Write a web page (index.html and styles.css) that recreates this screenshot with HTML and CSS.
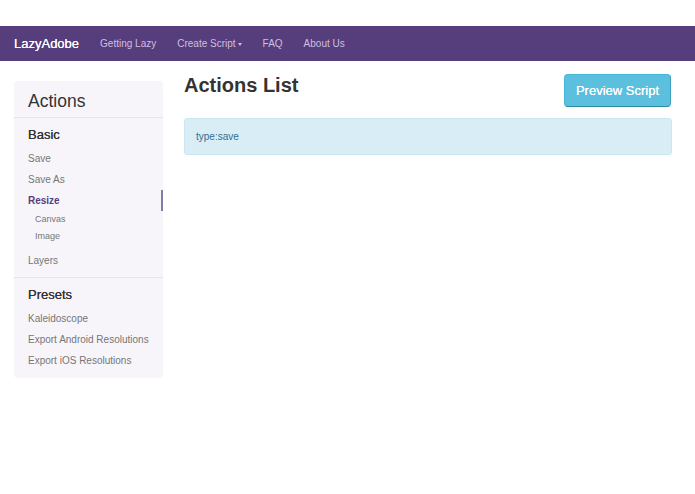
FILE: index.html
```html
<!DOCTYPE html>
<html>
<head>
<meta charset="utf-8">
<title>LazyAdobe</title>
<link rel="stylesheet" href="styles.css">
</head>
<body>
<header class="navbar">
  <a class="brand" href="#">LazyAdobe</a>
  <nav class="nav-links">
    <a href="#">Getting Lazy</a>
    <a href="#">Create Script<span class="caret"></span></a>
    <a href="#">FAQ</a>
    <a href="#">About Us</a>
  </nav>
</header>
<div class="layout">
  <aside class="sidebar">
    <h2 class="side-title">Actions</h2>
    <div class="side-section first">
      <h3 class="group-title">Basic</h3>
      <a class="item" href="#">Save</a>
      <a class="item" href="#">Save As</a>
      <a class="item active" href="#">Resize</a>
      <div class="sub">
        <a class="subitem" href="#">Canvas</a>
        <a class="subitem" href="#">Image</a>
      </div>
      <a class="item" href="#">Layers</a>
    </div>
    <div class="side-section">
      <h3 class="group-title">Presets</h3>
      <a class="item" href="#">Kaleidoscope</a>
      <a class="item" href="#">Export Android Resolutions</a>
      <a class="item" href="#">Export iOS Resolutions</a>
    </div>
  </aside>
  <main class="main">
    <div class="main-head">
      <h1 class="page-title">Actions List</h1>
      <button class="btn-info">Preview Script</button>
    </div>
    <div class="alert">type:save</div>
  </main>
</div>
</body>
</html>
```
FILE: styles.css
```css
* { box-sizing: border-box; }
html, body { margin: 0; padding: 0; background: #fff; }
body {
  font-family: "Liberation Sans", Arial, sans-serif;
  color: #333;
  padding-top: 26px;
}
a { text-decoration: none; }

.navbar {
  height: 35px;
  background: #563d7c;
  display: flex;
  align-items: center;
  padding-left: 14px;
}
.brand {
  color: #fff;
  font-size: 13px;
  line-height: 35px;
  margin-right: 10.5px;
  text-shadow: 0 0 0.4px #fff;
}
.nav-links { display: flex; }
.nav-links a {
  color: #cdbfe3;
  font-size: 10px;
  line-height: 35px;
  padding: 0 10.5px;
  display: flex;
  align-items: center;
}
.caret {
  display: inline-block;
  width: 0; height: 0;
  margin-left: 2px;
  margin-top: 1px;
  border-top: 3px solid #cdbfe3;
  border-left: 2.5px solid transparent;
  border-right: 2.5px solid transparent;
}

.layout {
  display: flex;
  align-items: flex-start;
  padding: 13px 23px 0 14px;
  gap: 21px;
}

.sidebar {
  width: 149px;
  flex: none;
  margin-top: 7px;
  background: #f7f5fa;
  border-radius: 4px;
  padding: 8px 0 7px;
}
.side-title {
  margin: 0 0 4px;
  padding: 0 14px;
  font-size: 17.5px;
  font-weight: normal;
  line-height: 24px;
  color: #333;
}
.side-section {
  border-top: 1px solid #e7e4ec;
  display: flex;
  flex-direction: column;
}
.side-section.first { padding: 7.5px 0 6px; }
.side-section:not(.first) { padding-top: 8px; }
.group-title {
  margin: 0 0 4px;
  padding: 0 14px;
  font-size: 13px;
  font-weight: normal;
  line-height: 18px;
  color: #333;
  text-shadow: 0 0 0.3px #333;
}
.item {
  display: block;
  padding: 0 14px;
  font-size: 10px;
  line-height: 21px;
  color: #767676;
  white-space: nowrap;
}
.item.active {
  color: #563d7c;
  font-weight: bold;
  border-right: 2px solid #857ba5;
  line-height: 21px;
  margin-top: 0.5px;
}
.sub {
  display: flex;
  flex-direction: column;
  margin-bottom: 5px;
}
.subitem {
  display: block;
  padding-left: 21px;
  font-size: 9px;
  line-height: 17px;
  color: #767676;
}

.main { flex: 1; min-width: 0; }
.main-head {
  display: flex;
  justify-content: space-between;
  align-items: flex-start;
  margin-bottom: 11px;
}
.page-title {
  margin: 0;
  font-size: 20px;
  font-weight: bold;
  line-height: 22px;
  color: #333;
}
.btn-info {
  width: 107px;
  height: 33px;
  background: #5bc0de;
  border: 1px solid #46b8da;
  border-bottom-color: #2f8aa6;
  border-right-color: #3b9fbd;
  border-radius: 4px;
  color: #fff;
  font-family: "Liberation Sans", Arial, sans-serif;
  font-size: 13px;
  padding: 0;
  margin-right: 1px;
  text-shadow: 0 0 0.4px #fff;
}
.alert {
  height: 37px;
  background: #d9edf7;
  border: 1px solid #cbe6f2;
  border-radius: 3px;
  color: #31708f;
  font-size: 10px;
  line-height: 35px;
  padding: 0 11px;
}
```
